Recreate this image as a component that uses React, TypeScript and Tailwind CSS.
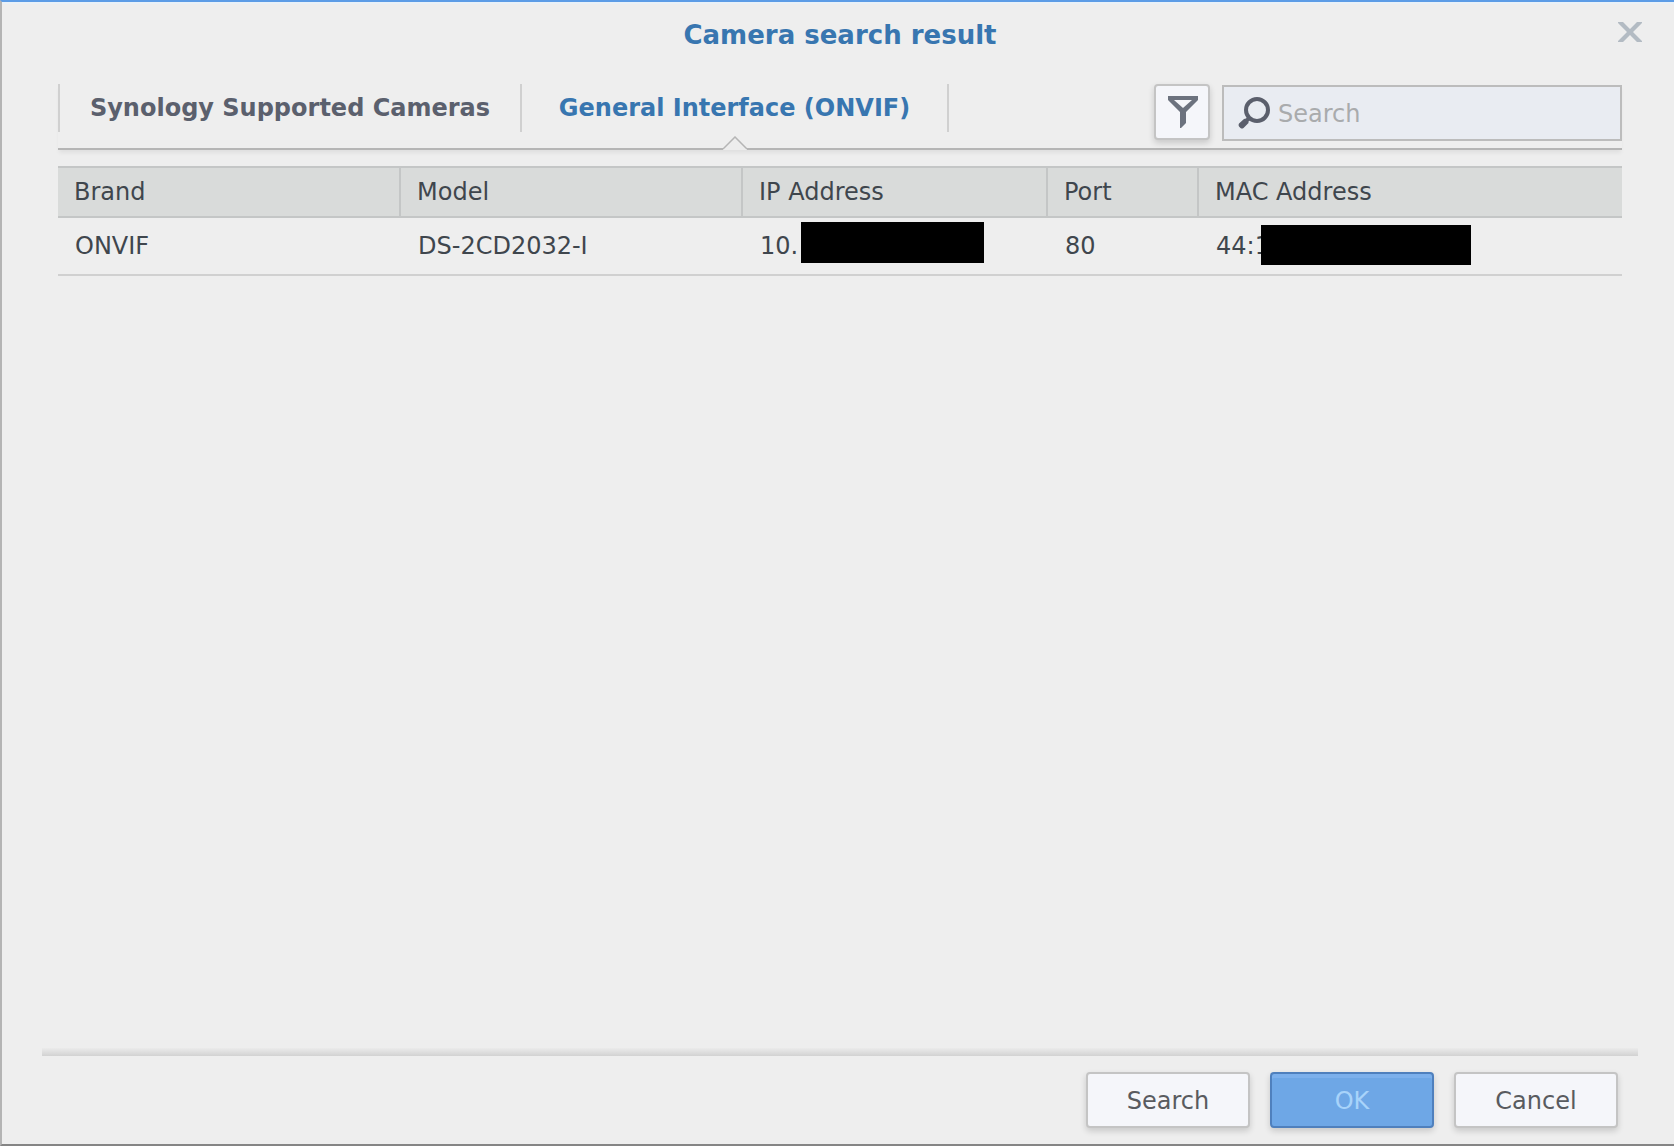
import { useState } from 'react';

const TABS = [
  { label: 'Synology Supported Cameras', width: 'w-[462px]' },
  { label: 'General Interface (ONVIF)', width: 'w-[427px]' },
];

interface Camera {
  brand: string;
  model: string;
  ip: string;
  port: number;
  mac: string;
}

const CAMERAS: Camera[] = [{ brand: 'ONVIF', model: 'DS-2CD2032-I', ip: '10.', port: 80, mac: '44:1' }];

const COLUMNS = [
  { label: 'Brand', width: 'w-[343px]' },
  { label: 'Model', width: 'w-[342px]' },
  { label: 'IP Address', width: 'w-[305px]' },
  { label: 'Port', width: 'w-[151px]' },
  { label: 'MAC Address', width: '' },
];

const buttonBase = 'h-14 w-[164px] rounded border-2 pt-0.5 shadow-[0_3px_6px_rgba(0,0,0,0.16)]';
const plainButton = `${buttonBase} border-[#c4c4c4] bg-[#f5f6fa] text-[#595b5f]`;

function FilterIcon() {
  return (
    <svg width="30" height="32" viewBox="0 0 30 32" aria-hidden="true">
      <path
        fillRule="evenodd"
        fill="#6c727e"
        d="M0 0H30V4L18 16V27L13 32H12V16L0 4ZM6 4L15 12L24 4Z"
      />
    </svg>
  );
}

function SearchIcon() {
  return (
    <svg className="shrink-0" width="32" height="32" viewBox="0 0 32 32" aria-hidden="true">
      <circle cx="19" cy="13" r="11" fill="none" stroke="#5b5f6c" strokeWidth="4" />
      <path d="M10 19L13 22L10.5 24.5L10.5 26L5.5 31Q4 32 2.5 31L1 29.5Q0 28 1 26.5L6 22L8 21.5Z" fill="#5b5f6c" />
    </svg>
  );
}

function CloseIcon() {
  return (
    <svg width="24" height="20" viewBox="0 0 24 20" aria-hidden="true">
      <path fill="#b3bbc3" d="M0 0H5L12 7L19 0H24V1L15 10L24 19V20H19L12 13L5 20H0V19L9 10L0 1Z" />
    </svg>
  );
}

function TabPointer() {
  return (
    <svg className="absolute -bottom-[18px] left-1/2 -translate-x-1/2" width="24" height="14" viewBox="0 0 24 14" aria-hidden="true">
      <path d="M0 14V12.5L12 1L24 12.5V14Z" fill="#ededed" />
      <path d="M0 13L12 1L24 13" fill="none" stroke="#b5b5b5" strokeWidth="1.5" />
    </svg>
  );
}

export default function App() {
  const [active, setActive] = useState(1);
  const [query, setQuery] = useState('');

  return (
    <div className="flex min-h-screen flex-col border-t-2 border-b-2 border-l-2 border-t-[#5c9ce6] border-b-[#858585] border-l-[#b4b4b4] bg-[#eeeeee] font-['Verdana','DejaVu_Sans',sans-serif] text-2xl text-[#3f464d] inset-shadow-[0_2px_0_#e9f1f8]">
      <header className="relative flex h-[82px] justify-center pt-[17px] pl-1">
        <h1 className="text-[26px] leading-8 font-bold text-[#3876b0]">Camera search result</h1>
        <button aria-label="Close" className="absolute top-5 right-8">
          <CloseIcon />
        </button>
      </header>

      <main className="flex grow flex-col pr-[52px] pl-14">
        <div className="flex h-[66px] items-start justify-between border-b-2 border-[#b5b5b5] shadow-[0_4px_4px_-1px_rgba(0,0,0,0.06)]">
          <nav className="flex border-l-2 border-[#d0d0d0]">
            {TABS.map(({ label, width }, i) => (
              <button
                key={label}
                onClick={() => setActive(i)}
                className={`${width} relative h-12 border-r-2 border-[#d0d0d0] font-bold whitespace-nowrap ${
                  i === active ? 'text-[#3876b0]' : 'text-[#5b606d]'
                }`}
              >
                {label}
                {i === active && <TabPointer />}
              </button>
            ))}
          </nav>
          <div className="flex gap-3">
            <button
              aria-label="Filter"
              className="flex size-14 items-center justify-center rounded border-2 border-[#c4c4c4] bg-[#f5f6fa] pl-0.5 shadow-[0_3px_6px_rgba(0,0,0,0.16)]"
            >
              <FilterIcon />
            </button>
            <label className="mt-px flex h-14 w-[400px] items-center gap-2 border-2 border-[#bcbcbc] bg-[#e9ecf2] px-[14px]">
              <SearchIcon />
              <input
                type="text"
                aria-label="Search cameras"
                placeholder="Search"
                value={query}
                onChange={(e) => setQuery(e.target.value)}
                className="w-full min-w-0 bg-transparent pt-0.5 outline-none placeholder:text-[#a9abad]"
              />
            </label>
          </div>
        </div>

        <table className="mt-4 w-full table-fixed border-separate border-spacing-0 text-left">
          <thead>
            <tr className="h-[52px] bg-[#d9dbda]">
              {COLUMNS.map(({ label, width }) => (
                <th
                  key={label}
                  className={`${width} border-y-2 border-r-2 border-[#c4c6c6] pl-4 font-normal last:border-r-0`}
                >
                  {label}
                </th>
              ))}
            </tr>
          </thead>
          <tbody>
            {CAMERAS.map((cam) => (
              <tr key={cam.model} className="h-[58px] *:border-b-2 *:border-[#d0d0d0] *:pl-[17px]">
                <td>{cam.brand}</td>
                <td>{cam.model}</td>
                <td>
                  <div className="flex items-center gap-[3px]">
                    {cam.ip}
                    <span className="-mt-4 -mb-2 h-[41px] w-[183px] bg-black" />
                  </div>
                </td>
                <td>{cam.port}</td>
                <td>
                  <div className="flex items-center">
                    {cam.mac}
                    <span className="-mt-[10px] -mb-2 -ml-[9px] h-10 w-[210px] bg-black" />
                  </div>
                </td>
              </tr>
            ))}
          </tbody>
        </table>
      </main>

      <footer className="pr-9 pl-10">
        <div className="h-2 bg-linear-to-b from-[#ebebeb] to-[#d2d2d2]" />
        <div className="flex justify-end gap-5 py-4 pr-5">
          <button className={plainButton}>Search</button>
          <button
            disabled
            className={`${buttonBase} border-[#4f80bd] bg-[#6ea7e6] text-[#a8d3fa] inset-shadow-[0_4px_0_#7cb0ec]`}
          >
            OK
          </button>
          <button className={plainButton}>Cancel</button>
        </div>
      </footer>
    </div>
  );
}
